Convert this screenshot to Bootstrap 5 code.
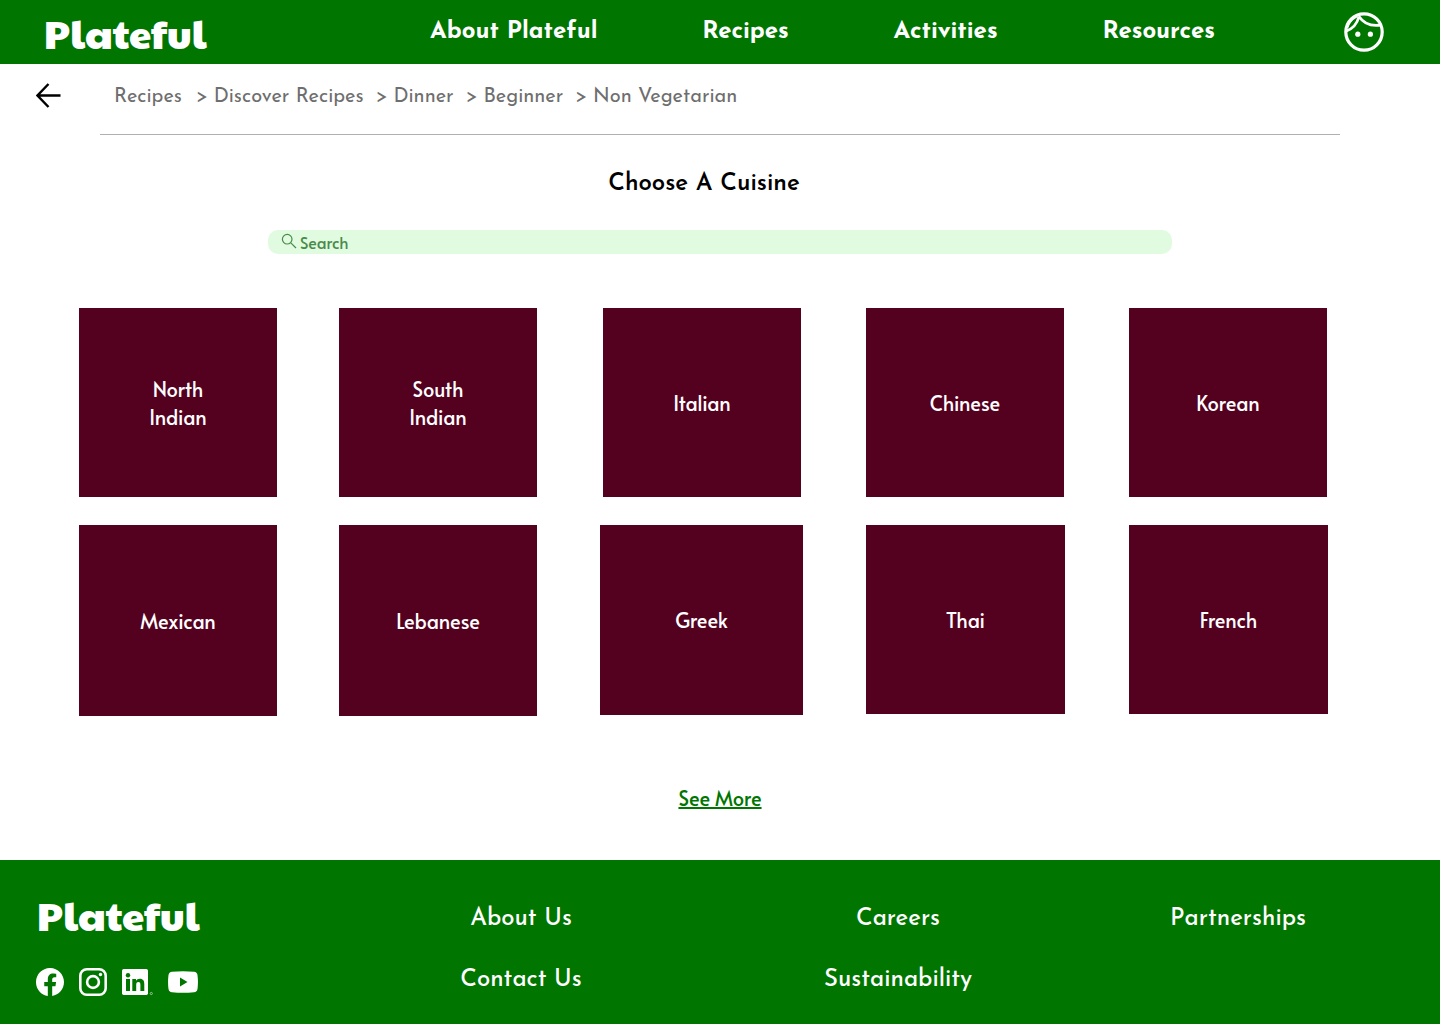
<!DOCTYPE html>
<html lang="en">
<head>
<meta charset="utf-8">
<meta name="viewport" content="width=device-width, initial-scale=1">
<title>Plateful – Choose A Cuisine</title>
<link href="https://cdn.jsdelivr.net/npm/bootstrap@5.3.0/dist/css/bootstrap.min.css" rel="stylesheet">
<style>
  :root { --leaf: #007500; --wine: #54001f; --label: Alata, Lato, sans-serif; }
  body { font-family: "Josefin Sans", Lato, sans-serif; color: #000; background: #fff; }
  a { color: inherit; text-decoration: none; }
  a:hover { text-decoration: underline; }
  svg { display: block; }
  .brand { font-family: "Paytone One", Lato, sans-serif; font-weight: 400; font-size: 40px; line-height: 48px; color: #fff; }
  .site-header { background: var(--leaf); height: 64px; padding: 0 56px 0 44px; }
  .site-nav { width: 785px; margin-right: 129px; font-size: 24px; line-height: 32px; font-weight: 700; color: #fff; }
  .trail-bar { padding: 0 100px 0 36px; }
  .back { width: 26px; margin-right: 38px; }
  .trail { height: 71px; border-bottom: 1px solid #b0b0b0; padding: 0 0 4px 14px; color: #6e6e6e; font-size: 20px; line-height: 28px; }
  .trail li:first-child { margin-right: 2px; }
  .trail li + li::before { content: ">"; margin: 0 6px 0 12px; }
  .page-title { font-size: 24px; line-height: 32px; font-weight: 600; margin: 33px 32px 30px 0; }
  .finder { max-width: 904px; }
  .finder svg { position: absolute; left: 13px; top: 3px; }
  .finder input { height: 24px; padding: 0 12px 0 32px; border: 0; border-radius: 10px; background: #e0fbe0; color: #4a8a4a; font-family: var(--label); font-size: 16px; line-height: 24px; }
  .finder input::placeholder { color: #4a8a4a; opacity: 1; }
  .cuisines { display: grid; grid-template-columns: minmax(0, 198fr) minmax(0, 199fr) minmax(0, 204fr) minmax(0, 201fr) minmax(0, 199fr); gap: 28px 62px; padding: 54px 112px 0 79px; align-items: start; }
  .tile { width: 100%; max-width: 199px; height: 189px; background: var(--wine); color: #fff; font-family: var(--label); font-size: 20px; line-height: 28px; padding: 0 50px; }
  .tile-slim { max-width: 198px; }
  .tile-center { justify-self: center; }
  .tile-mid { max-width: 203px; height: 190px; }
  .tile-tall { height: 191px; }
  .more { font-family: var(--label); font-size: 20px; line-height: 28px; color: var(--leaf); text-decoration: underline; margin: 68px 0 48px; }
  .site-footer { background: var(--leaf); color: #fff; display: grid; grid-template-columns: 332fr 378fr 376fr 304fr; padding: 30px 50px 24px 0; min-height: 164px; }
  .footer-brand { padding-left: 36px; }
  .footer-brand .brand { display: block; margin: 0 0 30px 1px; }
  .social { gap: 15px; }
  .footer-links { padding-top: 13px; gap: 29px; font-size: 24px; line-height: 32px; font-weight: 500; }
</style>
<script src="https://cdn.jsdelivr.net/npm/bootstrap@5.3.0/dist/js/bootstrap.bundle.min.js"></script>
</head>
<body>
<header class="site-header d-flex align-items-center">
  <a class="brand" href="#">Plateful</a>
  <nav class="site-nav d-flex justify-content-between ms-auto" aria-label="Main">
    <a href="#">About Plateful</a>
    <a href="#">Recipes</a>
    <a href="#">Activities</a>
    <a href="#">Resources</a>
  </nav>
  <a href="#" aria-label="Profile">
    <svg width="40" height="40" viewBox="0 0 40 40" fill="none" stroke="#fff" stroke-width="3.2">
      <circle cx="20" cy="20" r="18.2"/>
      <path d="M14.8 4.2C20 12 28 14.500 37 13M15 4.500C13 12 8 17 2.500 18.800M12.500 4C7.500 7 4 11 3.200 15.500" stroke-width="2.800"/>
      <circle cx="13.800" cy="22.200" r="2.600" fill="#fff" stroke="none"/>
      <circle cx="26.400" cy="22.200" r="2.600" fill="#fff" stroke="none"/>
    </svg>
  </a>
</header>

<main>
  <div class="trail-bar d-flex align-items-center">
    <a class="back pb-2" href="#" aria-label="Back">
      <svg width="26" height="26" viewBox="0 0 26 26" fill="none" stroke="#000" stroke-width="2.400"><path d="M24.500 12.500H2M12.500 1 1.500 12.500l11 11.500"/></svg>
    </a>
    <nav class="flex-grow-1" aria-label="Breadcrumb">
      <ol class="trail list-unstyled d-flex align-items-center mb-0">
        <li><a href="#">Recipes</a></li>
        <li><a href="#">Discover Recipes</a></li>
        <li><a href="#">Dinner</a></li>
        <li><a href="#">Beginner</a></li>
        <li><a href="#">Non Vegetarian</a></li>
      </ol>
    </nav>
  </div>

  <h1 class="page-title text-center">Choose A Cuisine</h1>

  <form class="finder position-relative mx-auto" role="search">
    <svg width="16" height="16" viewBox="0 0 16 16" fill="none" stroke="#4a8a4a" stroke-width="1.200"><circle cx="6.200" cy="6.200" r="4.800"/><path d="m9.800 9.800 5.200 5.200"/></svg>
    <input class="w-100 d-block" type="search" placeholder="Search" aria-label="Search cuisines">
  </form>

  <section class="cuisines" aria-label="Cuisines">
    <a class="tile tile-slim d-flex align-items-center justify-content-center text-center" href="#">North Indian</a>
    <a class="tile tile-slim d-flex align-items-center justify-content-center text-center" href="#">South Indian</a>
    <a class="tile tile-slim tile-center d-flex align-items-center justify-content-center text-center" href="#">Italian</a>
    <a class="tile tile-slim d-flex align-items-center justify-content-center text-center" href="#">Chinese</a>
    <a class="tile tile-slim d-flex align-items-center justify-content-center text-center" href="#">Korean</a>
    <a class="tile tile-slim tile-tall d-flex align-items-center justify-content-center text-center" href="#">Mexican</a>
    <a class="tile tile-slim tile-tall d-flex align-items-center justify-content-center text-center" href="#">Lebanese</a>
    <a class="tile tile-mid d-flex align-items-center justify-content-center text-center" href="#">Greek</a>
    <a class="tile d-flex align-items-center justify-content-center text-center" href="#">Thai</a>
    <a class="tile d-flex align-items-center justify-content-center text-center" href="#">French</a>
  </section>

  <div class="d-flex justify-content-center"><a class="more" href="#">See More</a></div>
</main>

<footer class="site-footer">
  <div class="footer-brand">
    <a class="brand" href="#">Plateful</a>
    <div class="social d-flex align-items-center">
      <a href="#" aria-label="Facebook">
        <svg width="28" height="28" viewBox="0 0 16 16" fill="#fff"><path d="M16 8.049c0-4.446-3.582-8.050-8-8.050C3.580 0-.002 3.603-.002 8.050c0 4.017 2.926 7.347 6.750 7.951v-5.625h-2.030V8.050H6.750V6.275c0-2.017 1.195-3.131 3.022-3.131.876 0 1.791.157 1.791.157v1.980h-1.009c-.993 0-1.303.621-1.303 1.258v1.510h2.218l-.354 2.326H9.250V16c3.824-.604 6.750-3.934 6.750-7.951z"/></svg>
      </a>
      <a href="#" aria-label="Instagram">
        <svg width="28" height="28" viewBox="0 0 28 28" fill="none" stroke="#fff" stroke-width="2.600"><rect x="1.300" y="1.300" width="25.400" height="25.400" rx="6.500"/><circle cx="14" cy="14" r="5.900"/><circle cx="21.500" cy="6.500" r="1.700" fill="#fff" stroke="none"/></svg>
      </a>
      <a href="#" aria-label="LinkedIn">
        <svg width="31" height="28" viewBox="0 0 31 28"><rect y="1" width="26" height="26" rx="1.800" fill="#fff"/><g fill="#007500"><circle cx="6" cy="7.200" r="2.200"/><path d="M4 11h4v12H4zM10.300 11h3.700v1.700c.8-1.300 2.100-2 3.800-2 3.500 0 4.500 2.200 4.500 5.600V23h-3.900v-6c0-1.700-.4-2.900-2-2.900-1.700 0-2.200 1.200-2.200 2.900v6h-3.900z"/></g><circle cx="29.300" cy="25.500" r="1.100" fill="none" stroke="#fff" stroke-width=".5"/></svg>
      </a>
      <a href="#" aria-label="YouTube">
        <svg width="30" height="28" viewBox="0 0 30 28"><path d="M4 3.700Q15 2.700 26 3.700q3 .4 3.500 3.300.9 7 0 14-.5 2.900-3.500 3.300-11 1-22 0Q1 23.900.5 21q-.9-7 0-14Q1 4.100 4 3.700z" fill="#fff"/><path d="M12 9.500v9l7.500-4.500z" fill="#007500"/></svg>
      </a>
    </div>
  </div>
  <div class="footer-links d-flex flex-column align-items-center">
    <a href="#">About Us</a>
    <a href="#">Contact Us</a>
  </div>
  <div class="footer-links d-flex flex-column align-items-center">
    <a href="#">Careers</a>
    <a href="#">Sustainability</a>
  </div>
  <div class="footer-links d-flex flex-column align-items-center">
    <a href="#">Partnerships</a>
  </div>
</footer>
</body>
</html>
